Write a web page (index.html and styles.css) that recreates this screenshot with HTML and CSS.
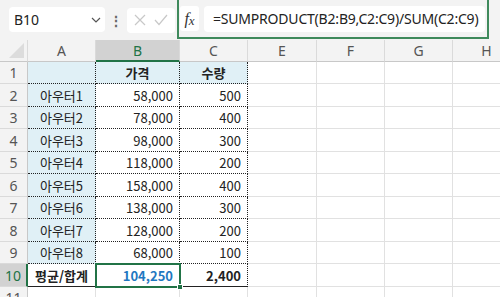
FILE: index.html
```html
<!DOCTYPE html>
<html lang="ko">
<head>
  <meta charset="UTF-8">
  <title>가격 평균</title>
  <link rel="stylesheet" href="styles.css">
</head>
<body>

  <!-- FORMULA BAR -->
  <div class="toolbar">
    <div class="name-box">
      <span>B10</span>
      <svg class="chevron" width="10" height="6" viewBox="0 0 10 6"><path d="M1 1 L5 5 L9 1" fill="none" stroke="#555" stroke-width="1.2"/></svg>
    </div>
    <div class="grip">⋮</div>
    <div class="edit-icons">
      <svg width="12" height="12" viewBox="0 0 12 12"><path d="M1 1 L11 11 M11 1 L1 11" stroke="#c8c8c8" stroke-width="1.2"/></svg>
      <svg width="14" height="12" viewBox="0 0 14 12"><path d="M1 6 L5 10.5 L13 1" fill="none" stroke="#c8c8c8" stroke-width="1.2"/></svg>
    </div>
    <div class="formula-wrap">
      <div class="fx-btn"><i>f</i><i class="x">x</i></div>
      <div class="formula">=SUMPRODUCT(B2:B9,C2:C9)/SUM(C2:C9)</div>
    </div>
  </div>

  <!-- SHEET -->
  <div class="sheet">
    <div class="hd corner"></div>
    <div class="hd">A</div>
    <div class="hd sel-col">B</div>
    <div class="hd">C</div>
    <div class="hd">E</div>
    <div class="hd">F</div>
    <div class="hd">G</div>
    <div class="hd">H</div>

    <div class="rh">1</div>
    <div class="c rng fill"></div>
    <div class="c rng fill bold center">가격</div>
    <div class="c rng fill bold center">수량</div>
    <div class="c"></div><div class="c"></div><div class="c"></div><div class="c"></div>

    <div class="rh">2</div>
    <div class="c rng fill center">아우터1</div>
    <div class="c rng num">58,000</div>
    <div class="c rng num">500</div>
    <div class="c"></div><div class="c"></div><div class="c"></div><div class="c"></div>

    <div class="rh">3</div>
    <div class="c rng fill center">아우터2</div>
    <div class="c rng num">78,000</div>
    <div class="c rng num">400</div>
    <div class="c"></div><div class="c"></div><div class="c"></div><div class="c"></div>

    <div class="rh">4</div>
    <div class="c rng fill center">아우터3</div>
    <div class="c rng num">98,000</div>
    <div class="c rng num">300</div>
    <div class="c"></div><div class="c"></div><div class="c"></div><div class="c"></div>

    <div class="rh">5</div>
    <div class="c rng fill center">아우터4</div>
    <div class="c rng num">118,000</div>
    <div class="c rng num">200</div>
    <div class="c"></div><div class="c"></div><div class="c"></div><div class="c"></div>

    <div class="rh">6</div>
    <div class="c rng fill center">아우터5</div>
    <div class="c rng num">158,000</div>
    <div class="c rng num">400</div>
    <div class="c"></div><div class="c"></div><div class="c"></div><div class="c"></div>

    <div class="rh">7</div>
    <div class="c rng fill center">아우터6</div>
    <div class="c rng num">138,000</div>
    <div class="c rng num">300</div>
    <div class="c"></div><div class="c"></div><div class="c"></div><div class="c"></div>

    <div class="rh">8</div>
    <div class="c rng fill center">아우터7</div>
    <div class="c rng num">128,000</div>
    <div class="c rng num">200</div>
    <div class="c"></div><div class="c"></div><div class="c"></div><div class="c"></div>

    <div class="rh">9</div>
    <div class="c rng fill center">아우터8</div>
    <div class="c rng num">68,000</div>
    <div class="c rng num">100</div>
    <div class="c"></div><div class="c"></div><div class="c"></div><div class="c"></div>

    <div class="rh sel-row">10</div>
    <div class="c rng total bold center">평균/합계</div>
    <div class="c rng total num active">104,250<span class="handle"></span></div>
    <div class="c rng total bold num">2,400</div>
    <div class="c"></div><div class="c"></div><div class="c"></div><div class="c"></div>

    <div class="rh">11</div>
    <div class="c"></div><div class="c"></div><div class="c"></div>
    <div class="c"></div><div class="c"></div><div class="c"></div><div class="c"></div>
  </div>

</body>
</html>
```

FILE: styles.css
```css
* {
  box-sizing: border-box;
}

html, body {
  margin: 0;
  padding: 0;
  width: 500px;
  height: 297px;
  overflow: hidden;
  background: #fff;
  font-family: "Noto Sans", "Noto Sans CJK KR", sans-serif;
}

.toolbar {
  height: 40px;
  background: #f3f3f3;
  display: flex;
  align-items: center;
  padding-left: 9px;
}

.name-box {
  width: 96px;
  height: 25px;
  margin-top: -1px;
  background: #fff;
  border-radius: 4px;
  display: flex;
  align-items: center;
  justify-content: space-between;
  padding: 0 4px 0 5px;
  font-size: 14px;
  color: #222;
}

.grip {
  width: 22px;
  text-align: center;
  color: #666;
  font-size: 14px;
  font-weight: bold;
}

.edit-icons {
  width: 48px;
  height: 25px;
  background: #fff;
  border-radius: 4px;
  display: flex;
  align-items: center;
  justify-content: space-around;
  padding: 0 3px;
}

.formula-wrap {
  margin-left: 2px;
  width: 312px;
  height: 42px;
  margin-top: -4px;
  border: 2px solid #3f8a5c;
  border-top-width: 0;
  display: flex;
  align-items: center;
  gap: 5px;
  padding: 0 2px 0 1px;
}

.fx-btn {
  width: 19px;
  height: 25px;
  margin-top: 3px;
  background: #fff;
  border-radius: 3px;
  font-family: "Liberation Serif", serif;
  font-size: 16px;
  color: #333;
  display: flex;
  align-items: center;
  justify-content: center;
}

.fx-btn .x {
  font-size: 13px;
  margin-top: 4px;
}

.formula {
  flex: 1;
  height: 26px;
  margin-top: 3px;
  background: #fff;
  border-radius: 4px;
  padding-left: 9px;
  font-size: 14px;
  line-height: 26px;
  color: #222;
  letter-spacing: -0.2px;
  white-space: nowrap;
}

.sheet {
  display: grid;
  grid-template-columns: 28px 68px 84px 68px 69px 68px 68px 68px;
  grid-template-rows: 22px 22px 23px 22px 23px 22px 23px 22px 23px 22px 23px 22px;
  font-size: 13px;
}

.hd, .rh {
  background: #f3f3f3;
  color: #555;
  display: flex;
  align-items: center;
  justify-content: center;
  border-right: 1px solid #dadada;
  border-bottom: 1px solid #c8c8c8;
  font-size: 14px;
}

.rh {
  border-bottom-color: #dadada;
  border-right-color: #c8c8c8;
}

.corner {
  position: relative;
}

.corner::after {
  content: "";
  position: absolute;
  right: 3px;
  bottom: 3px;
  border-left: 15px solid transparent;
  border-bottom: 15px solid #dcdcdc;
}

.sel-col {
  background: #d2d2d2;
  color: #217346;
  border-bottom: 2px solid #217346;
}

.sel-row {
  background: #d2d2d2;
  color: #217346;
  border-right: 2px solid #217346;
}

.c {
  border-right: 1px solid #e1e1e1;
  border-bottom: 1px solid #e1e1e1;
  display: flex;
  align-items: center;
  padding: 0 6px;
  color: #222;
  font-family: "Noto Sans CJK KR", sans-serif;
  white-space: nowrap;
}

.rng {
  border-right: 1px dotted #222;
  border-bottom: 1px dotted #222;
}

.fill {
  background: #e0f0f6;
}

.center {
  justify-content: center;
}

.num {
  justify-content: flex-end;
}

.bold {
  font-weight: bold;
}

.total {
  border-bottom: 1px solid #222;
}

.active {
  position: relative;
  color: #1f78c1;
  font-weight: 600;
  outline: 2px solid #217346;
  outline-offset: -1px;
}

.handle {
  position: absolute;
  right: -4px;
  bottom: -4px;
  width: 6px;
  height: 6px;
  background: #217346;
  border: 1px solid #fff;
}
```
